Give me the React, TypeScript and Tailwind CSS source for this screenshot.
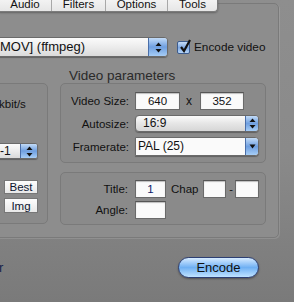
const aqua =
  "bg-gradient-to-b from-[#c2dbf7] via-[#6f9fe0] to-[#a6cdf6]";

function UpDown() {
  return (
    <svg width="7" height="11" viewBox="0 0 7 11">
      <path d="M3.5 0.5 L6.5 4 L0.5 4 Z" fill="#111" />
      <path d="M3.5 10.5 L6.5 7 L0.5 7 Z" fill="#111" />
    </svg>
  );
}

function Down() {
  return (
    <svg width="7" height="5" viewBox="0 0 7 5">
      <path d="M0.5 0.5 L6.5 0.5 L3.5 4.5 Z" fill="#111" />
    </svg>
  );
}

function Field({ w, children }: { w: string; children?: React.ReactNode }) {
  return (
    <div
      className={`${w} h-[18px] bg-[#fafafa] border border-[#6a6a6a] border-t-[#555] shadow-[inset_0_1px_1px_rgba(0,0,0,0.25)] flex items-center justify-center text-[11.5px] leading-[14px] text-[#111]`}
    >
      {children}
    </div>
  );
}

export default function App() {
  return (
    <div className="w-[294px] h-[302px] overflow-hidden bg-gradient-to-b from-[#8e8e8e] via-[#8a8a8a] to-[#7a7a7a] text-[#111] font-['Liberation_Sans',Arial,sans-serif]">
      {/* tab pane */}
      <div className="relative ml-[-100px] mt-[3px] w-[379px] h-[235px] rounded-[5px] border border-[#7a7a7a] bg-[#8d8d8d] shadow-[1px_1px_0_rgba(255,255,255,0.12)]">
        {/* tab bar */}
        <div className="absolute left-[98px] top-[-15px] flex h-[23px] items-end rounded-br-[4px] border-b border-r border-[#7c7c7c] bg-gradient-to-b from-[#ffffff] to-[#e6e6e6] shadow-[0_1px_2px_rgba(0,0,0,0.3)] text-[11.5px] leading-[13px] text-[#111]">
          <div className="w-[53px] h-full flex items-end justify-center border-r border-[#a8a8a8]">Audio</div>
          <div className="w-[54px] h-full flex items-end justify-center border-r border-[#a8a8a8]">Filters</div>
          <div className="w-[62px] h-full flex items-end justify-center border-r border-[#a8a8a8]">Options</div>
          <div className="w-[49px] h-full flex items-end justify-center">Tools</div>
        </div>

        {/* row 1: format popup + encode video */}
        <div className="flex items-center mt-[33px]">
          <div className="ml-[89px] flex h-[20px] w-[178px] overflow-hidden rounded-[4px] border border-[#6a6a6a] bg-gradient-to-b from-[#fbfbfb] via-[#ececec] to-[#dadada] shadow-[0_1px_1px_rgba(0,0,0,0.3)]">
            <div className="flex-1 pl-[9px] text-[13px] leading-[18px] whitespace-nowrap">MOV] (ffmpeg)</div>
            <div className={`w-[19px] flex items-center justify-center border-l border-[#4a6ea8] ${aqua}`}>
              <UpDown />
            </div>
          </div>
          <div className="relative ml-[9px] w-[13px] h-[13px] rounded-[2px] border border-[#3c5c8f] bg-gradient-to-b from-[#c7ddf7] via-[#7fa9e3] to-[#b6d5f7]">
            <svg className="absolute left-[1px] top-[-3px]" width="13" height="14" viewBox="0 0 13 14">
              <path d="M2 8 L5 12 L11 1" stroke="#111" strokeWidth="2.2" fill="none" strokeLinejoin="miter" />
            </svg>
          </div>
          <span className="ml-[4px] text-[11.8px] leading-[14px] whitespace-nowrap">Encode video</span>
        </div>

        {/* row 2 */}
        <div className="flex items-start mt-[11px]">
          {/* left (cut) group */}
          <div className="ml-[39px] pt-[15px]">
            <div className="w-[108px] h-[141px] rounded-[5px] border border-[#7a7a7a] bg-[#8a8a8a] flex flex-col items-start">
              <span className="ml-[58px] mt-[13px] text-[11.5px] leading-[14px]">kbit/s</span>
              <div className="ml-[39px] mt-[32px] flex h-[16px] w-[58px] overflow-hidden rounded-[3px] border border-[#6a6a6a] bg-gradient-to-b from-[#fbfbfb] via-[#ececec] to-[#dadada] shadow-[0_1px_1px_rgba(0,0,0,0.3)]">
                <div className="flex-1 pl-[19px] text-[12px] leading-[14px]">-1</div>
                <div className={`w-[17px] flex items-center justify-center border-l border-[#4a6ea8] ${aqua}`}>
                  <UpDown />
                </div>
              </div>
              <div className="ml-[63px] mt-[21px] w-[34px] h-[14px] border border-[#777] bg-gradient-to-b from-[#fdfdfd] to-[#e8e8e8] flex items-center justify-center text-[11.5px] leading-[12px] text-[#0b1530]">Best</div>
              <div className="ml-[63px] mt-[4px] w-[34px] h-[15px] border border-[#777] bg-gradient-to-b from-[#fdfdfd] to-[#e8e8e8] flex items-center justify-center text-[11.5px] leading-[12px] text-[#0b1530]">Img</div>
            </div>
          </div>

          {/* right column */}
          <div className="ml-[12px] flex flex-col">
            <div className="pl-[9px] text-[13.5px] leading-[15px] text-[#2a2a2a] whitespace-nowrap">Video parameters</div>
            <div className="w-[206px] h-[80px] rounded-[5px] border border-[#7a7a7a] bg-[#8a8a8a] pt-[8px] flex flex-col">
              <div className="flex items-center h-[18px]">
                <span className="w-[68px] text-right text-[11.5px] leading-[14px]">Video Size:</span>
                <div className="ml-[6px]"><Field w="w-[45px]">640</Field></div>
                <span className="ml-[6px] w-[12px] text-[12px] leading-[14px]">x</span>
                <div className="ml-[2px]"><Field w="w-[44px]">352</Field></div>
              </div>
              <div className="flex items-center h-[17px] mt-[5px]">
                <span className="w-[68px] text-right text-[11.5px] leading-[14px]">Autosize:</span>
                <div className="ml-[6px] flex h-[17px] w-[124px] overflow-hidden rounded-[4px] border border-[#6a6a6a] bg-gradient-to-b from-[#fbfbfb] via-[#e6e6e6] to-[#d6d6d6] shadow-[0_1px_1px_rgba(0,0,0,0.3)]">
                  <div className="flex-1 pl-[7px] text-[12px] leading-[15px]">16:9</div>
                  <div className={`w-[13px] flex items-center justify-center border-l border-[#4a6ea8] ${aqua}`}>
                    <UpDown />
                  </div>
                </div>
              </div>
              <div className="flex items-center h-[19px] mt-[5px]">
                <span className="w-[68px] text-right text-[11.5px] leading-[14px]">Framerate:</span>
                <div className="ml-[6px] flex h-[19px] w-[124px] overflow-hidden rounded-r-[4px] border border-[#6a6a6a] bg-[#fafafa] shadow-[0_1px_1px_rgba(0,0,0,0.3)]">
                  <div className="flex-1 pl-[2px] text-[12px] leading-[17px]">PAL (25)</div>
                  <div className={`w-[13px] flex items-center justify-center border-l border-[#4a6ea8] ${aqua}`}>
                    <Down />
                  </div>
                </div>
              </div>
            </div>

            <div className="mt-[9px] w-[206px] h-[53px] rounded-[5px] border border-[#7a7a7a] bg-[#8a8a8a] pt-[7px] flex flex-col">
              <div className="flex items-center h-[18px]">
                <span className="w-[67px] text-right text-[11.5px] leading-[14px]">Title:</span>
                <div className="ml-[7px]"><Field w="w-[31px]"><span className="text-[#0b1a6a]">1</span></Field></div>
                <span className="ml-[5px] text-[11.5px] leading-[14px]">Chap</span>
                <div className="ml-[4px]"><Field w="w-[23px]" /></div>
                <span className="ml-[2px] w-[7px] text-center text-[11px] leading-[14px]">-</span>
                <div className="ml-[0px]"><Field w="w-[24px]" /></div>
              </div>
              <div className="flex items-center h-[18px] mt-[3px]">
                <span className="w-[67px] text-right text-[11.5px] leading-[14px]">Angle:</span>
                <div className="ml-[7px]"><Field w="w-[31px]" /></div>
              </div>
            </div>
          </div>
        </div>
      </div>

      {/* bottom row */}
      <div className="flex items-center mt-[19px] h-[21px]">
        <span className="ml-[-1px] w-[6px] text-[13px] leading-[16px] text-[#14224a]">r</span>
        <button className="ml-[173px] w-[81px] h-[21px] rounded-full border border-[#2d3f73] bg-gradient-to-b from-[#d6ebff] via-[#6fb0f3] to-[#bfe3ff] shadow-[0_1px_2px_rgba(0,0,0,0.35)] text-[13px] leading-[16px] text-[#111] flex items-center justify-center">
          Encode
        </button>
      </div>
    </div>
  );
}
